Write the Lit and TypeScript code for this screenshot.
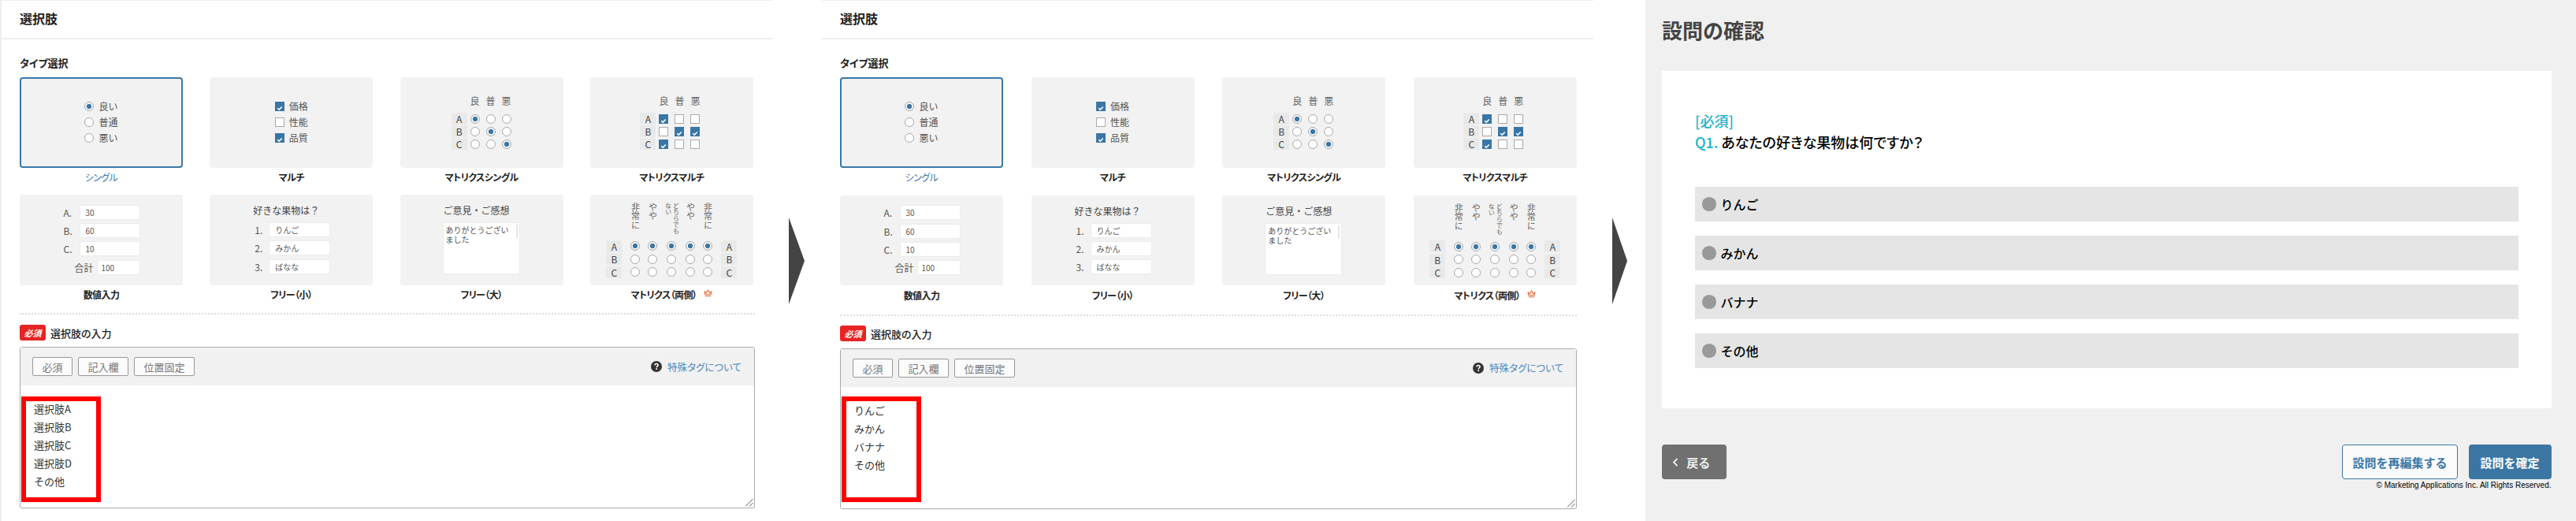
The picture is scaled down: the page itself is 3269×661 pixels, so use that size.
import { LitElement, html, css } from "lit";
import { customElement } from "lit/decorators.js";

const check = html`<svg viewBox="0 0 12 12" width="12" height="12"><path d="M3.2 6.2 5.2 8.1 8.8 4.4" fill="none" stroke="#fff" stroke-width="1.5"/></svg>`;
const radio = (on: boolean) => html`<span class="radio ${on ? "on" : ""}"></span>`;
const box = (on: boolean) => html`<span class="box ${on ? "on" : ""}">${on ? check : ""}</span>`;
const crown = html`<svg class="crown" viewBox="0 0 12 11" width="11" height="10"><path d="M1 2.5 3.4 5.4 6 1 8.6 5.4 11 2.5 10 7.6H2ZM2 9.6H10" fill="none" stroke="#ea7a4c" stroke-width="1.3"/></svg>`;
const question = html`<svg viewBox="0 0 14 14" width="14" height="14"><circle cx="7" cy="7" r="7" fill="#333"/><path d="M4.9 5.4C5 4.2 5.9 3.5 7 3.5 8.2 3.5 9.1 4.3 9.1 5.3 9.1 6.6 7.2 6.7 7.2 8.2" fill="none" stroke="#fff" stroke-width="1.6"/><rect x="6.3" y="9.2" width="1.8" height="1.7" fill="#fff"/></svg>`;

@customElement("app-root")
export class AppRoot extends LitElement {
  static styles = css`
    :host { display: block; width: 3269px; height: 661px; background: #fff; overflow: hidden;
      font-family: "Noto Sans CJK JP", "Noto Sans", sans-serif; color: #222; }
    .page { display: flex; height: 661px; }
    .panel { width: 979px; flex: none; border-top: 1px solid #eee; box-sizing: border-box; }
    .panel.p1 { border-left: 2px solid #eee; --cw: 207px; --gapx: 34.3px; --rowgap: 10.5px; --dash: 11.5px; --badge: 13px; --boxh: 204.5px; --bt: 8px; --redtop: 62px; }
    .panel.p2 { --cw: 207px; --gapx: 35.6px; --rowgap: 11px; --dash: 12.5px; --badge: 12.5px; --boxh: 204.5px; --bt: 8.5px; --redtop: 60.5px; }
    .head { height: 47px; border-bottom: 2px solid #eee; padding-left: 23px; font-size: 16px; font-weight: 700; line-height: 45px; color: #222; }
    .body { padding: 20px 21px 0 23px; }
    .sub { font-size: 13px; font-weight: 700; line-height: 20px; margin-bottom: 8px; font-feature-settings: "palt"; }
    .grid { display: grid; grid-template-columns: repeat(4, var(--cw)); column-gap: var(--gapx); row-gap: var(--rowgap); }
    .item { display: flex; flex-direction: column; }
    .card { height: 114.5px; box-sizing: border-box; background: #f2f2f2; border-radius: 4px; display: flex; flex-direction: column; align-items: center; justify-content: center; color: #555; font-size: 12px; }
    .card.sel { border: 2px solid #3b78a8; }
    .cap { height: 24px; line-height: 23px; text-align: center; font-size: 12px; letter-spacing: -0.6px; font-weight: 700; color: #222; font-feature-settings: "palt"; display: flex; justify-content: center; align-items: center; gap: 9px; }
    .cap.sel { font-weight: 400; color: #3b78a8; }
    .crown { margin-top: -3px; }
    .radio { display: block; width: 12px; height: 12px; box-sizing: border-box; border: 1px solid #aaa; border-radius: 50%; background: #fff; }
    .radio.on { background: radial-gradient(circle, #3a76a5 0 2.8px, #f4f4f4 3.4px); }
    .box { display: block; width: 12px; height: 12px; box-sizing: border-box; border: 1px solid #aaa; background: #fff; }
    .box.on { border: 0; background: #3a76a5; }
    .list { display: grid; grid-template-columns: 12px auto; column-gap: 6px; row-gap: 2px; align-items: center; line-height: 18px; }
    .mx { display: grid; grid-template-columns: 20px 20px 20px 20px; grid-template-rows: 23px 16px 16px 16px; justify-items: center; align-items: center; }
    .mx.single { padding-left: 3px; }
    .mx .h { align-self: start; line-height: 15px; font-size: 12px; color: #666; }
    .lab { width: 20px; height: 15px; line-height: 15px; background: #e9e9e9; text-align: center; font-size: 12px; color: #444; }
    .nums { display: flex; flex-direction: column; gap: 6.3px; width: 96px; }
    .nrow { display: flex; justify-content: flex-end; align-items: center; font-size: 12px; color: #555; }
    .nlab { flex: 1; line-height: 17px; }
    .nlab.tot { text-align: right; padding-right: 5px; }
    .field { height: 17px; background: #fff; border-radius: 1px; font-size: 10px; line-height: 18px; color: #555; box-sizing: border-box; box-shadow: 0 0 0 1px #ececec; }
    .w75 { width: 75px; padding-left: 7px; }
    .w53 { width: 53px; padding-left: 5px; }
    .free { display: flex; flex-direction: column; width: 97px; height: 100%; padding-top: 12px; box-sizing: border-box; }
    .ftitle { line-height: 16px; font-size: 12px; color: #444; margin-bottom: 8px; white-space: nowrap; }
    .frow { display: flex; align-items: center; margin-bottom: 6.3px; font-size: 12px; color: #555; }
    .flab { width: 21px; padding-left: 2px; box-sizing: border-box; }
    .w76 { width: 76px; padding-left: 7px; }
    .ta { position: relative; width: 96px; height: 64px; background: #fff; box-shadow: 0 0 0 1px #ececec; font-size: 10px; line-height: 12px; padding: 3px; box-sizing: border-box; color: #555; white-space: nowrap; }
    .ta i { position: absolute; right: 2px; top: 2px; width: 2px; height: 17px; background: #e6e6e6; }
    .both { display: grid; grid-template-columns: 26px 22px 22px 26px 22px 22px 26px; grid-template-rows: 47px 16.4px 16.4px 16.4px; justify-items: center; align-items: center; margin-top: 2px; }
    .both .lab.l { justify-self: start; }
    .both .lab.r { justify-self: end; }
    .v { writing-mode: vertical-rl; align-self: start; font-size: 11px; line-height: 12px; color: #666; letter-spacing: 0.5px; white-space: nowrap; }
    .v.s { font-size: 8px; line-height: 10px; letter-spacing: 0; }
    .dash { border-top: 2px dotted #ddd; margin-top: var(--dash); }
    .reqrow { display: flex; align-items: center; gap: 6px; margin-top: var(--badge); height: 20px; font-size: 13px; font-weight: 500; font-feature-settings: "palt"; }
    .badge { width: 33px; height: 20px; border-radius: 3px; background: #e62424; color: #fff; font-size: 11px; font-weight: 700; font-style: italic; line-height: 20px; text-align: center; }
    .ebox { position: relative; margin-top: var(--bt); height: var(--boxh); box-sizing: border-box; border: 1px solid #aaa; border-bottom-width: 1.5px; border-radius: 3px; }
    .bar { height: 48px; background: #f1f1f1; display: flex; align-items: center; padding: 0 16px 0 15px; gap: 7px; }
    .btn { height: 24px; box-sizing: border-box; border: 1px solid #999; border-radius: 2px; background: #fbfbfb; padding: 0 11.5px; font-size: 13px; line-height: 23px; color: #777; }
    .help { margin-left: auto; display: flex; align-items: center; gap: 7px; font-size: 12.5px; color: #4a8abf; font-feature-settings: "palt"; }
    .lines { padding: 18px 0 0 17px; font-size: 13px; line-height: 23px; color: #333; }
    .red { position: absolute; left: 1px; top: var(--redtop); width: 101px; height: 134px; box-sizing: border-box; border: 6px solid #f00; }
    .grip { position: absolute; right: 1px; bottom: 1px; }
    .arrow { flex: none; margin-top: 276px; width: 20px; height: 110px; background: #444; clip-path: polygon(0 0, 100% 50%, 0 100%); }
    .a1 { margin-left: 22px; margin-right: 22px; }
    .a2 { margin-left: 24px; margin-right: 23px; width: 19px; }
    .final { flex: 1; background: #f0f0f0; padding: 0 31.5px 0 21px; height: 661px; box-sizing: border-box; }
    .ftit { height: 90px; font-size: 26px; font-weight: 700; color: #444; line-height: 76px; }
    .paper { background: #fff; height: 428px; box-sizing: border-box; padding: 50px 42px 0; }
    .must, .q { font-size: 18px; line-height: 27px; font-weight: 500; color: #000; font-feature-settings: "palt"; }
    .must, .q b { color: #19b3cc; font-weight: 500; }
    .opts { display: flex; flex-direction: column; gap: 18px; margin-top: 43px; }
    .opt { height: 44px; background: #e5e5e5; display: flex; align-items: center; padding-left: 9px; gap: 6px; font-size: 16px; font-weight: 500; color: #000; }
    .dot { width: 17.5px; height: 17.5px; border-radius: 50%; background: #999; }
    .foot { display: flex; justify-content: space-between; margin-top: 46px; }
    .cta { height: 44px; box-sizing: border-box; border-radius: 4px; font-size: 15px; font-weight: 700; display: flex; align-items: center; justify-content: center; }
    .back { width: 81.5px; background: #707070; color: #eee; gap: 10px; padding-right: 7px; }
    .rgroup { display: flex; flex-direction: column; align-items: flex-end; }
    .rbtns { display: flex; gap: 13.5px; }
    .edit { width: 147px; border: 1px solid #3b78a8; background: #fafafa; color: #3b78a8; }
    .ok { width: 105px; background: #3b76a3; color: #fff; }
    .copy { font-family: "Liberation Sans", sans-serif; font-size: 10px; line-height: 14px; margin-top: 1px; color: #000; white-space: nowrap; }
  `;

  private matrix(kind: "single" | "multi") {
    const on = kind === "single"
      ? [[1, 0, 0], [0, 1, 0], [0, 0, 1]]
      : [[1, 0, 0], [0, 1, 1], [1, 0, 0]];
    const mark = (v: number) => (kind === "single" ? radio(!!v) : box(!!v));
    return html`<div class="mx ${kind}">
      <span></span><span class="h">良</span><span class="h">普</span><span class="h">悪</span>
      ${["A", "B", "C"].map((l, r) => html`<span class="lab">${l}</span>${on[r].map(mark)}`)}
    </div>`;
  }

  private cards() {
    return html`<div class="grid">
      <div class="item"><div class="card sel"><div class="list">
        ${radio(true)}<span>良い</span>${radio(false)}<span>普通</span>${radio(false)}<span>悪い</span>
      </div></div><div class="cap sel">シングル</div></div>
      <div class="item"><div class="card"><div class="list">
        ${box(true)}<span>価格</span>${box(false)}<span>性能</span>${box(true)}<span>品質</span>
      </div></div><div class="cap">マルチ</div></div>
      <div class="item"><div class="card">${this.matrix("single")}</div><div class="cap">マトリクスシングル</div></div>
      <div class="item"><div class="card">${this.matrix("multi")}</div><div class="cap">マトリクスマルチ</div></div>

      <div class="item"><div class="card"><div class="nums">
        ${[["A.", "30"], ["B.", "60"], ["C.", "10"]].map(([l, v]) => html`<div class="nrow"><span class="nlab">${l}</span><div class="field w75">${v}</div></div>`)}
        <div class="nrow"><span class="nlab tot">合計</span><div class="field w53">100</div></div>
      </div></div><div class="cap">数値入力</div></div>
      <div class="item"><div class="card"><div class="free">
        <div class="ftitle">好きな果物は？</div>
        ${[["1.", "りんご"], ["2.", "みかん"], ["3.", "ばなな"]].map(([l, v]) => html`<div class="frow"><span class="flab">${l}</span><div class="field w76">${v}</div></div>`)}
      </div></div><div class="cap">フリー（小）</div></div>
      <div class="item"><div class="card"><div class="free">
        <div class="ftitle">ご意見・ご感想</div>
        <div class="ta">ありがとうござい<br />ました<i></i></div>
      </div></div><div class="cap">フリー（大）</div></div>
      <div class="item"><div class="card"><div class="both">
        <span></span>
        <span class="v">非常に</span><span class="v">やや</span><span class="v s">どちらでも<br />ない</span><span class="v">やや</span><span class="v">非常に</span>
        <span></span>
        ${["A", "B", "C"].map((l, r) => html`<span class="lab l">${l}</span>${[0, 1, 2, 3, 4].map(() => radio(r === 0))}<span class="lab r">${l}</span>`)}
      </div></div><div class="cap">マトリクス（両側）${crown}</div></div>
    </div>`;
  }

  private editor(cls: string, lines: string[]) {
    return html`<section class="panel ${cls}">
      <div class="head">選択肢</div>
      <div class="body">
        <div class="sub">タイプ選択</div>
        ${this.cards()}
        <div class="dash"></div>
        <div class="reqrow"><span class="badge">必須</span>選択肢の入力</div>
        <div class="ebox">
          <div class="bar">
            <span class="btn">必須</span><span class="btn">記入欄</span><span class="btn">位置固定</span>
            <span class="help">${question}特殊タグについて</span>
          </div>
          <div class="lines">${lines.map((l) => html`<div>${l}</div>`)}</div>
          <div class="red"></div>
          <svg class="grip" viewBox="0 0 10 10" width="10" height="10"><path d="M0 9.5 9.5 0M5 9.5 9.5 5" stroke="#555" stroke-width="1" fill="none"/></svg>
        </div>
      </div>
    </section>`;
  }

  render() {
    return html`<div class="page">
      ${this.editor("p1", ["選択肢A", "選択肢B", "選択肢C", "選択肢D", "その他"])}
      <div class="arrow a1"></div>
      ${this.editor("p2", ["りんご", "みかん", "バナナ", "その他"])}
      <div class="arrow a2"></div>
      <section class="final">
        <div class="ftit">設問の確認</div>
        <div class="paper">
          <div class="must">[必須]</div>
          <div class="q"><b>Q1.</b> あなたの好きな果物は何ですか？</div>
          <div class="opts">
            ${["りんご", "みかん", "バナナ", "その他"].map((o) => html`<div class="opt"><span class="dot"></span>${o}</div>`)}
          </div>
        </div>
        <div class="foot">
          <div class="cta back"><svg viewBox="0 0 8 11" width="8" height="11"><path d="M6.5 1 2 5.5 6.5 10" fill="none" stroke="#eee" stroke-width="1.8"/></svg>戻る</div>
          <div class="rgroup">
            <div class="rbtns"><div class="cta edit">設問を再編集する</div><div class="cta ok">設問を確定</div></div>
            <div class="copy">© Marketing Applications Inc. All Rights Reserved.</div>
          </div>
        </div>
      </section>
    </div>`;
  }
}
